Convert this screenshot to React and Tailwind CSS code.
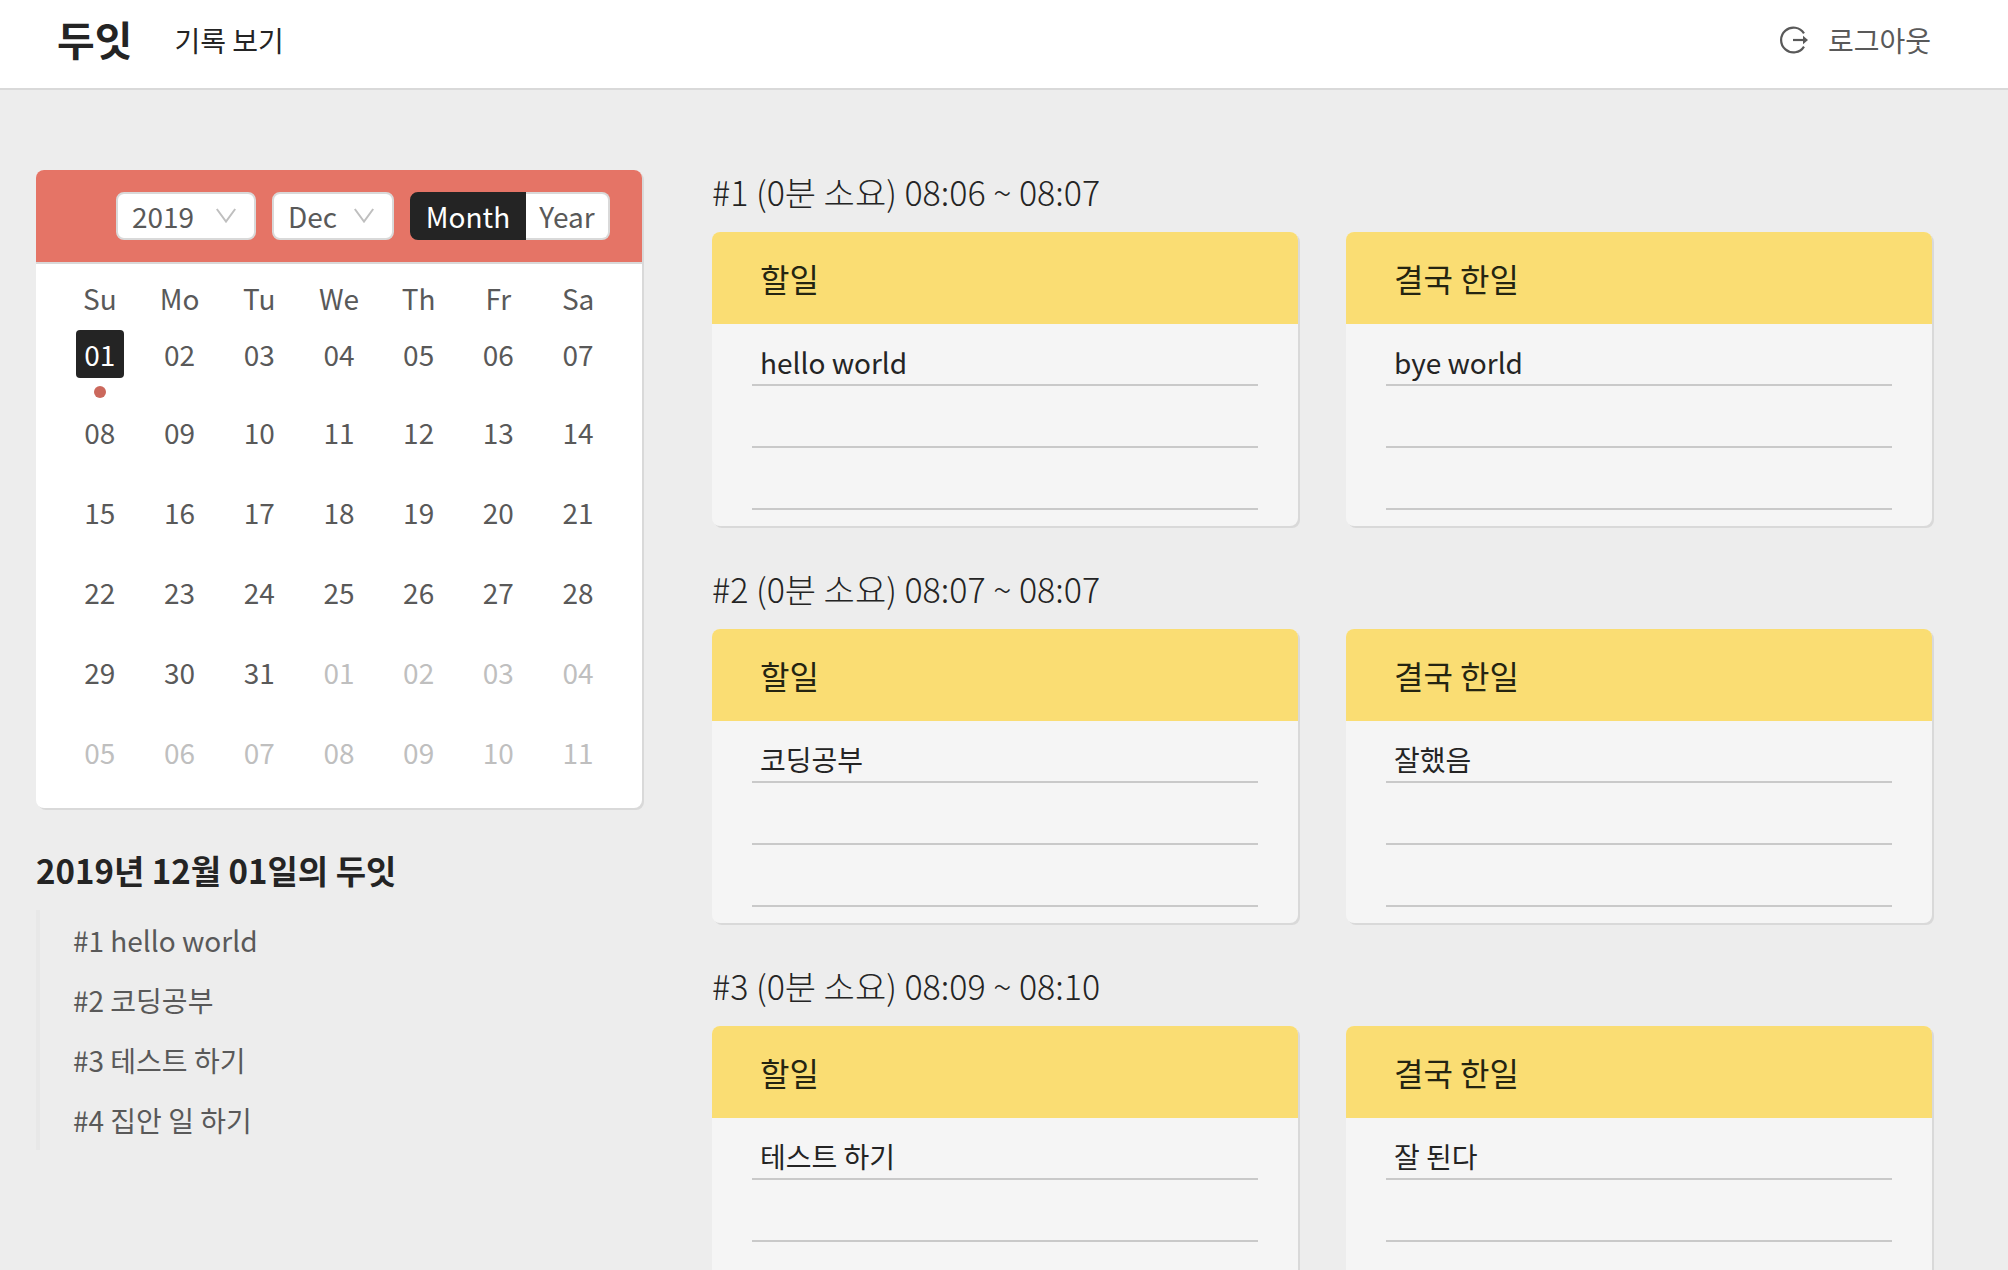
const weekdays = ['Su', 'Mo', 'Tu', 'We', 'Th', 'Fr', 'Sa'];

const pad = (n) => String(n).padStart(2, '0');

// December 2019 starts on a Sunday; the grid runs on into January.
const weeks = Array.from({ length: 6 }, (_, w) =>
  Array.from({ length: 7 }, (_, d) => {
    const n = w * 7 + d + 1;
    return { label: pad(n > 31 ? n - 31 : n), outside: n > 31, selected: n === 1 };
  })
);

const records = [
  { id: 1, time: '08:06 ~ 08:07', todo: 'hello world', done: 'bye world' },
  { id: 2, time: '08:07 ~ 08:07', todo: '코딩공부', done: '잘했음' },
  { id: 3, time: '08:09 ~ 08:10', todo: '테스트 하기', done: '잘 된다' },
];

const summary = ['#1 hello world', '#2 코딩공부', '#3 테스트 하기', '#4 집안 일 하기'];

function LogoutIcon() {
  return (
    <svg className="size-7" viewBox="0 0 28 28" fill="none" aria-hidden="true">
      <path d="M24 7.4A12.4 12.4 0 1 0 24 20.6" stroke="currentColor" strokeWidth="2.2" />
      <path d="M13 14h11" stroke="currentColor" strokeWidth="2.2" />
      <path d="M23 9.8 28 14l-5 4.2z" fill="currentColor" />
    </svg>
  );
}

function Select({ label, options, value, className }) {
  return (
    <div className={`relative h-12 ${className}`}>
      <select
        aria-label={label}
        defaultValue={value}
        className="block size-full appearance-none rounded-lg border-2 border-[#d9d9d9] bg-white pl-3.5 text-[28px] leading-[44px] text-[#595959]"
      >
        {options.map((o) => (
          <option key={o}>{o}</option>
        ))}
      </select>
      <svg
        className="pointer-events-none absolute top-4 right-5 h-4 w-5 text-[#bfbfbf]"
        viewBox="0 0 20 16"
        fill="none"
        stroke="currentColor"
        strokeWidth="2"
        aria-hidden="true"
      >
        <path d="M.8 1 10 13.6 19.2 1" />
      </svg>
    </div>
  );
}

function Calendar() {
  return (
    <section className="overflow-hidden rounded-lg bg-white pb-2 shadow-[2px_2px_0_#d9d9d9]">
      <div className="flex h-[94px] items-center justify-end gap-4 border-b-2 border-[#d9d9d9] bg-[#e57466] px-8">
        <Select label="Year" value="2019" options={['2018', '2019', '2020']} className="w-[140px]" />
        <Select label="Month" value="Dec" options={['Oct', 'Nov', 'Dec']} className="w-[122px]" />
        <div role="radiogroup" aria-label="View" className="flex h-12 text-[28px] leading-[44px]">
          <label className="w-[116px] cursor-pointer rounded-l-lg border-2 border-[#242424] bg-[#242424] text-center text-white">
            <input type="radio" name="view" defaultChecked className="sr-only" />
            Month
          </label>
          <label className="w-[84px] cursor-pointer rounded-r-lg border-2 border-l-0 border-[#d9d9d9] bg-white text-center text-[#595959]">
            <input type="radio" name="view" className="sr-only" />
            Year
          </label>
        </div>
      </div>
      <div className="px-6">
        <table className="w-full table-fixed border-collapse text-[28px] text-[#595959]">
          <thead>
            <tr className="h-[58px]">
              {weekdays.map((d) => (
                <th key={d} className="pt-2.5 leading-12 font-normal">
                  {d}
                </th>
              ))}
            </tr>
          </thead>
          <tbody>
            {weeks.map((week, i) => (
              <tr key={i} className={i === 0 ? 'h-[78px]' : 'h-20'}>
                {week.map((day, j) => (
                  <td key={j} className="pt-2 text-center align-top">
                    <button
                      type="button"
                      className={
                        day.selected
                          ? 'mx-auto block size-12 rounded bg-[#242424] leading-12 text-white'
                          : day.outside
                            ? 'mx-auto block size-12 leading-12 text-[#bfbfbf]'
                            : 'mx-auto block size-12 leading-12'
                      }
                    >
                      {day.label}
                    </button>
                    {day.selected && <span className="mx-auto mt-2 block size-3 rounded-full bg-[#cb685c]" />}
                  </td>
                ))}
              </tr>
            ))}
          </tbody>
        </table>
      </div>
    </section>
  );
}

function Note({ title, text }) {
  return (
    <article className="overflow-hidden rounded-lg bg-[#f5f5f5] pb-4 shadow-[2px_2px_0_#d9d9d9]">
      <h3 className="bg-[#fadd73] px-12 text-[32px] leading-[92px] font-normal text-[#242411]">{title}</h3>
      <ul className="px-10">
        {[text, '', ''].map((line, i) => (
          <li key={i} className="h-[62px] border-b-2 border-[#c9c9c9] px-2 pt-3.5 text-[28px] leading-12">
            {line}
          </li>
        ))}
      </ul>
    </article>
  );
}

export default function App() {
  return (
    <div className="flex h-screen flex-col bg-[#ededed] font-['Noto_Sans_CJK_KR',sans-serif] text-[#242424]">
      <header className="flex h-[90px] shrink-0 items-start border-b-2 border-[#d9d9d9] bg-white pt-2 pr-[77px] pl-[57px]">
        <a href="#home" className="text-[41px] leading-[60px] font-bold">
          두잇
        </a>
        <a href="#records" className="ml-[42px] text-[28px] leading-16">
          기록 보기
        </a>
        <button type="button" className="ml-auto flex items-center gap-5 text-[28px] leading-16 text-[#595959]">
          <LogoutIcon />
          로그아웃
        </button>
      </header>
      <main className="grid min-h-0 flex-1 grid-cols-[303fr_610fr] gap-[70px] overflow-y-auto pr-[76px] pl-9 [scrollbar-width:none]">
        <aside className="pt-20">
          <Calendar />
          <h2 className="mt-[38px] text-[33px] leading-12 font-bold">2019년 12월 01일의 두잇</h2>
          <ul className="mt-4 border-l-4 border-[#e8e8e8] pl-[33px] text-[28px] leading-[60px] text-[#595959]">
            {summary.map((s) => (
              <li key={s}>{s}</li>
            ))}
          </ul>
        </aside>
        <div className="pt-[39px]">
          {records.map((r) => (
            <section key={r.id}>
              <h2 className="pt-[35px] pb-[13px] text-[34px] leading-[55px] font-light">
                #{r.id} (0분 소요) {r.time}
              </h2>
              <div className="grid grid-cols-2 gap-12">
                <Note title="할일" text={r.todo} />
                <Note title="결국 한일" text={r.done} />
              </div>
            </section>
          ))}
        </div>
      </main>
    </div>
  );
}
